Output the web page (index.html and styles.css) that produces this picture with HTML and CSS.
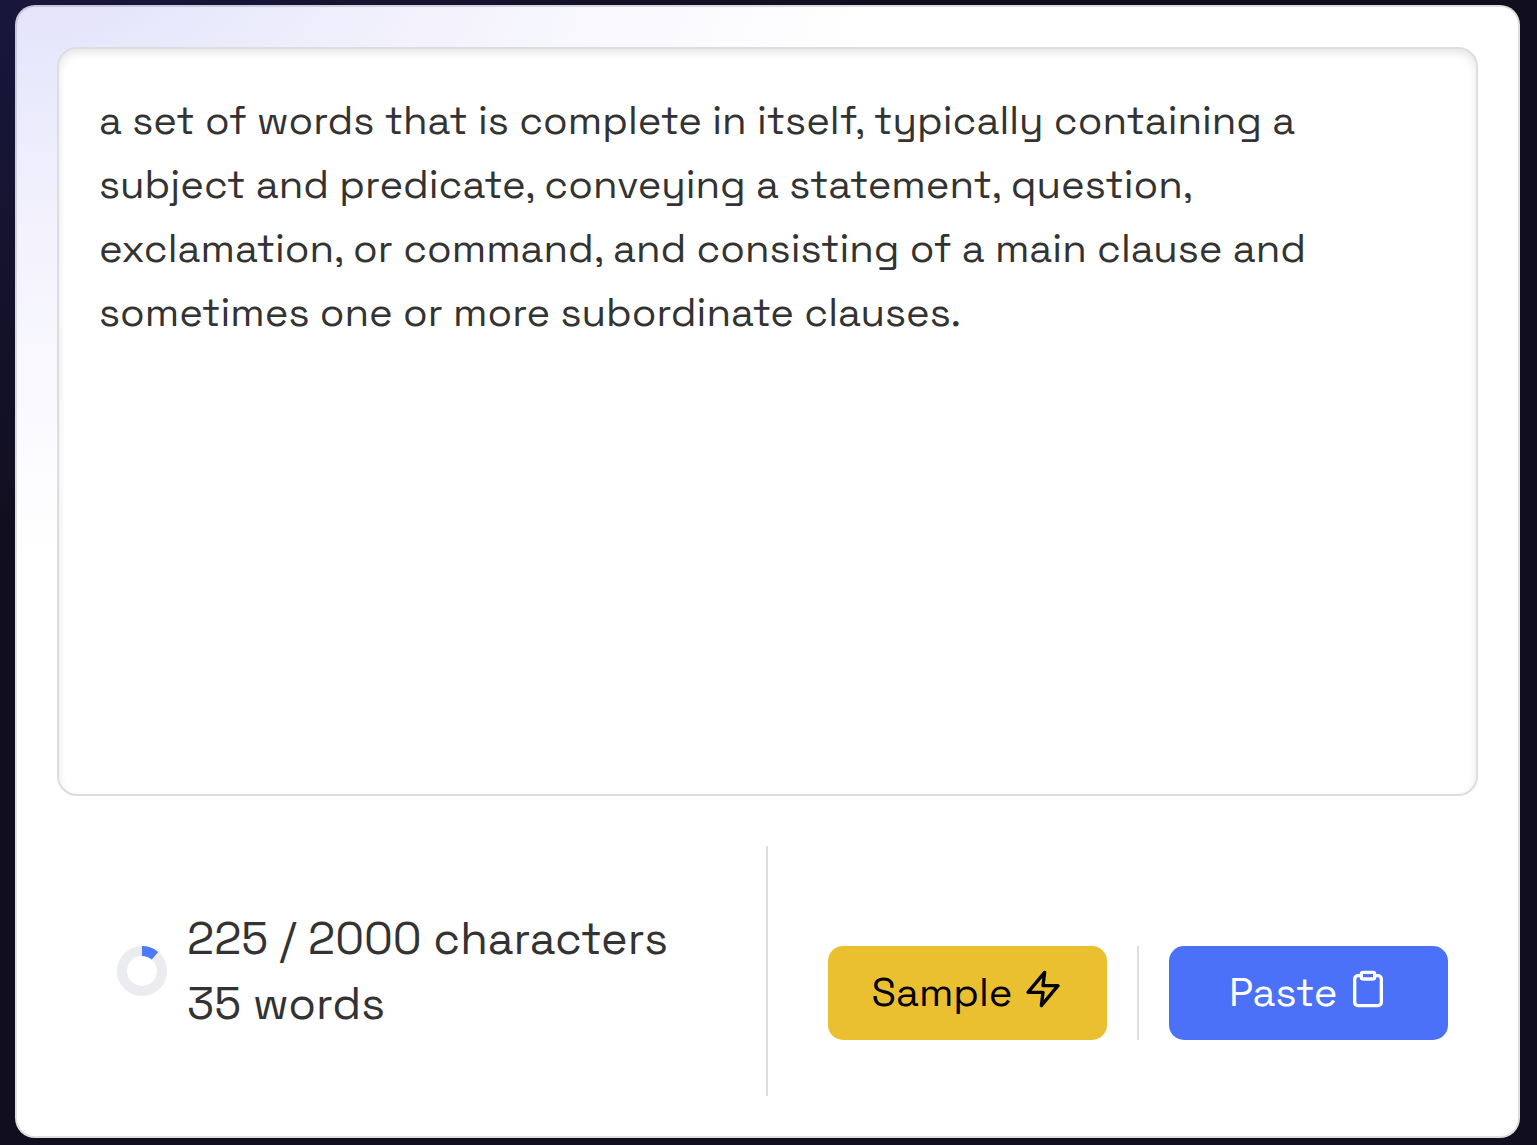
FILE: index.html
```html
<!DOCTYPE html>
<html lang="en">
<head>
<meta charset="utf-8">
<meta name="viewport" content="width=device-width, initial-scale=1">
<title>Text editor</title>
<link rel="stylesheet" href="styles.css">
</head>
<body>
<main class="card">
  <textarea class="editor" aria-label="Your text" spellcheck="false">a set of words that is complete in itself, typically containing a subject and predicate, conveying a statement, question, exclamation, or command, and consisting of a main clause and sometimes one or more subordinate clauses.</textarea>
  <div class="footer">
    <div class="stats">
      <svg class="ring" viewBox="0 0 50 50" aria-hidden="true">
        <circle class="ring-track" cx="25" cy="25" r="20"/>
        <circle class="ring-value" cx="25" cy="25" r="20" pathLength="2000" stroke-dasharray="225 2000" transform="rotate(-90 25 25)"/>
      </svg>
      <div class="counts">
        <div>225 / 2000 characters</div>
        <div>35 words</div>
      </div>
    </div>
    <div class="actions">
      <button class="btn btn-sample" type="button">Sample <svg class="icon" viewBox="0 0 24 24" aria-hidden="true"><path d="M13 2 3 14h9l-1 8 10-12h-9l1-8z"/></svg></button>
      <span class="separator"></span>
      <button class="btn btn-paste" type="button">Paste <svg class="icon" viewBox="0 0 24 24" aria-hidden="true"><path d="M16 4h2a2 2 0 0 1 2 2v14a2 2 0 0 1-2 2H6a2 2 0 0 1-2-2V6a2 2 0 0 1 2-2h2"/><rect x="8" y="2" width="8" height="4" rx="1" ry="1"/></svg></button>
    </div>
  </div>
</main>
</body>
</html>
```

FILE: styles.css
```css
* { box-sizing: border-box; }

body {
  display: flex;
  min-height: 100vh;
  margin: 0;
  padding: 5px 17px 7px 15px;
  background: radial-gradient(ellipse 900px 600px at 0 -60px, #19173f, #110f1e) #110f1e;
  color: #333;
  font-family: "Space Grotesk", Inter, sans-serif;
}

.card {
  display: flex;
  flex: 1;
  flex-direction: column;
  gap: 50px;
  padding: 40px;
  border: 2px solid rgba(0, 0, 0, 0.13);
  border-radius: 20px;
  background: radial-gradient(ellipse 900px 700px at 0 -120px, #e5e2fb 15%, #e7e8fb 25%, #f3f2fd 50%, #f9f9fe 70%, #fff 97%) #fff;
  background-clip: border-box;
  background-origin: border-box;
}

.editor {
  display: block;
  flex: 1;
  width: 100%;
  min-height: 400px;
  padding: 40px;
  border: 2px solid #ddd;
  border-radius: 20px;
  outline: 0;
  background: #fff;
  box-shadow: inset 0 4px 8px rgba(0, 0, 0, 0.1);
  color: #333;
  font: inherit;
  font-size: 40px;
  line-height: 64px;
  resize: none;
}

.footer {
  display: grid;
  grid-template-columns: 1fr 1fr;
  min-height: 250px;
}

.stats {
  display: flex;
  align-items: center;
  gap: 20px;
  padding-left: 60px;
  border-right: 2px solid #ddd;
}

.ring { flex: none; width: 50px; height: 50px; }
.ring circle { fill: none; stroke-width: 10; }
.ring .ring-track { stroke: #ebecf0; }
.ring .ring-value { stroke: #4b7bfa; }

.counts { font-size: 45px; line-height: 65px; white-space: nowrap; }

.actions {
  display: flex;
  align-items: flex-start;
  gap: 30px;
  padding: 100px 30px 56px 60px;
}

.separator { align-self: stretch; width: 2px; background: #ddd; }

.btn {
  flex: 1 1 0;
  height: 94px;
  padding: 0;
  border: 0;
  border-radius: 15px;
  font: inherit;
  font-size: 40px;
  line-height: 64px;
  white-space: nowrap;
}

.btn-sample { background: #eac031; color: #000; }
.btn-paste { background: #4a71f8; color: #fff; }

.icon {
  width: 40px;
  height: 40px;
  vertical-align: -3px;
  fill: none;
  stroke: currentColor;
  stroke-width: 2;
  stroke-linecap: round;
  stroke-linejoin: round;
}
```
